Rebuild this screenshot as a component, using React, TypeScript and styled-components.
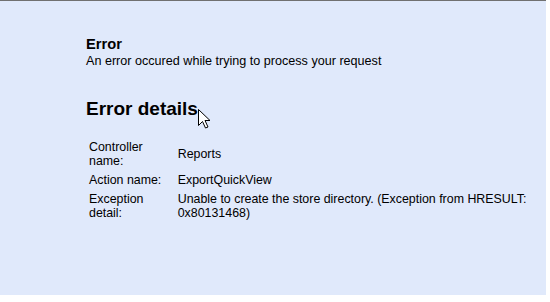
import styled, { createGlobalStyle } from "styled-components";

const GlobalStyle = createGlobalStyle`
  html, body {
    margin: 0;
    padding: 0;
    background: #ffffff;
  }
  body {
    font-family: "Liberation Sans", Arial, sans-serif;
    color: #000000;
  }
`;

const Page = styled.div`
  position: relative;
  box-sizing: border-box;
  width: 546px;
  height: 295px;
  background: #e0e9fb;
  border-top: 1px solid #707070;
  padding: 35px 0 0 86px;
`;

const Title = styled.h1`
  margin: 0;
  font-size: 14.7px;
  line-height: 16px;
  font-weight: bold;
`;

const Subtitle = styled.p`
  margin: 2px 0 0;
  font-size: 12.6px;
  line-height: 14px;
`;

const Heading = styled.h2`
  margin: 30px 0 0;
  font-size: 19px;
  line-height: 22px;
  font-weight: bold;
`;

const DetailsTable = styled.table`
  margin-top: 17px;
  border-collapse: collapse;
  font-size: 12.4px;
  line-height: 14px;
`;

const Label = styled.td`
  width: 83px;
  padding: 3px 3px 2px;
  vertical-align: middle;
`;

const Value = styled.td`
  width: 368px;
  padding: 3px 3px 2px;
  vertical-align: middle;
`;

const Cursor = styled.svg`
  position: absolute;
  left: 198px;
  top: 108px;
  width: 13px;
  height: 20px;
`;

const details = [
  { label: "Controller name:", value: "Reports" },
  { label: "Action name:", value: "ExportQuickView" },
  {
    label: "Exception detail:",
    value:
      "Unable to create the store directory. (Exception from HRESULT: 0x80131468)",
  },
];

export default function App() {
  return (
    <>
      <GlobalStyle />
      <Page>
        <Title>Error</Title>
        <Subtitle>An error occured while trying to process your request</Subtitle>
        <Heading>Error details</Heading>
        <DetailsTable>
          <tbody>
            {details.map((row) => (
              <tr key={row.label}>
                <Label>{row.label}</Label>
                <Value>{row.value}</Value>
              </tr>
            ))}
          </tbody>
        </DetailsTable>
        <Cursor viewBox="0 0 13 20">
          <path
            d="M0.5 0.5 L0.5 16.5 L4.5 12.5 L7.5 19 L10 18 L7 11.5 L12 11.5 Z"
            fill="#ffffff"
            stroke="#000000"
            strokeWidth="1"
            strokeLinejoin="miter"
          />
        </Cursor>
      </Page>
    </>
  );
}
